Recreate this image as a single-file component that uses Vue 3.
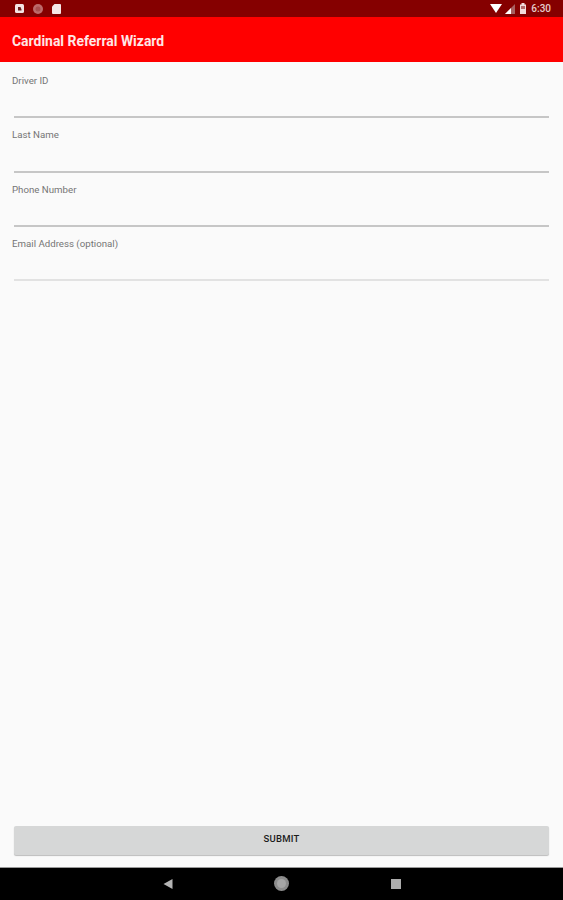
<script setup>
const fields = [
  { label: 'Driver ID' },
  { label: 'Last Name' },
  { label: 'Phone Number' },
  { label: 'Email Address (optional)', faint: true }
]
</script>

<template>
  <div class="screen">
    <div class="status-bar">
      <div class="status-left">
        <svg width="9" height="9" viewBox="0 0 9 9">
          <rect width="9" height="9" rx="1.5" fill="#f4e4e4" />
          <path d="M3 3H5.5L6.5 5.5V6.5H3z" fill="#6d2020" />
        </svg>
        <svg width="10" height="10" viewBox="0 0 10 10">
          <circle cx="5" cy="5" r="5" fill="#bd6b6b" />
          <circle cx="5" cy="5" r="2.5" fill="#a85050" />
        </svg>
        <svg width="9" height="10" viewBox="0 0 9 10">
          <path d="M2.5 0H8a1 1 0 0 1 1 1V9a1 1 0 0 1-1 1H1a1 1 0 0 1-1-1V2.5z" fill="#f6e8e8" />
        </svg>
      </div>
      <div class="status-right">
        <svg width="12" height="9" viewBox="0 0 12 9">
          <path d="M0 0H12L6 9z" fill="#fff" />
        </svg>
        <svg class="signal" width="10" height="10" viewBox="0 0 10 10">
          <path d="M10 0V10H0z" fill="#a86060" />
          <path d="M6 4V10H0z" fill="#fff" />
        </svg>
        <svg class="battery" width="6" height="11" viewBox="0 0 6 11">
          <path d="M1.5 0V1.5H0V11H6V1.5H4.5V0z" fill="#f2dcdc" />
          <rect x="1" y="3" width="4" height="3" fill="#b56a6a" />
        </svg>
        <span class="clock">6:30</span>
      </div>
    </div>

    <header class="app-bar">Cardinal Referral Wizard</header>

    <main class="content">
      <form class="form" @submit.prevent>
        <div v-for="field in fields" :key="field.label" class="field">
          <label class="field-label">{{ field.label }}</label>
          <div class="field-line" :class="{ faint: field.faint }"></div>
        </div>
      </form>
      <button class="submit" type="button">SUBMIT</button>
    </main>

    <nav class="nav-bar">
      <svg width="10" height="10" viewBox="0 0 10 10">
        <path d="M0.5 5L9.5 0V10z" fill="#b4b4b4" />
      </svg>
      <svg class="home" width="15" height="15" viewBox="0 0 15 15">
        <circle cx="7.5" cy="7.5" r="7.5" fill="#8c8c8c" />
        <circle cx="7.5" cy="7.5" r="4.5" fill="#a6a6a6" />
      </svg>
      <svg width="10" height="10" viewBox="0 0 10 10">
        <rect width="10" height="10" fill="#acacac" />
      </svg>
    </nav>
  </div>
</template>

<style>
html,
body {
  margin: 0;
  background: #fafafa;
}
</style>

<style scoped>
.screen {
  width: 563px;
  height: 900px;
  display: flex;
  flex-direction: column;
  background: #fafafa;
  font-family: Roboto, "Liberation Sans", sans-serif;
  overflow: hidden;
}

.status-bar {
  height: 17px;
  flex: none;
  display: flex;
  align-items: center;
  justify-content: space-between;
  padding: 0 12px 0 15px;
  background: #850000;
}

.status-left {
  display: flex;
  align-items: center;
  gap: 9px;
}

.status-right {
  display: flex;
  align-items: center;
  gap: 3px;
}

.battery {
  margin-left: 2px;
}

.clock {
  margin-left: 2px;
  font-size: 10px;
  font-weight: 500;
  color: #e6cccc;
}

.app-bar {
  height: 45px;
  flex: none;
  display: flex;
  align-items: center;
  padding: 2px 12px 0;
  box-sizing: border-box;
  background: #ff0000;
  color: #ffe6e6;
  font-size: 13.95px;
  font-weight: 700;
}

.content {
  flex: 1;
  display: flex;
  flex-direction: column;
  justify-content: space-between;
  padding: 13px 14px 12px 12px;
}

.form {
  display: flex;
  flex-direction: column;
}

.field {
  height: 54.25px;
  box-sizing: border-box;
  display: flex;
  flex-direction: column;
  justify-content: space-between;
  padding-bottom: 11px;
}

.field-label {
  font-size: 9.7px;
  line-height: 12px;
  color: #757575;
}

.field-line {
  height: 2px;
  margin-left: 2px;
  background: #c6c6c6;
}

.field-line.faint {
  background: #e2e2e2;
}

.submit {
  height: 29px;
  margin-left: 2px;
  padding: 0 0 4px;
  border: none;
  border-radius: 2px;
  background: #d6d7d7;
  box-shadow: 0 1px 1px #bcbcbc;
  color: #1c1c1c;
  font-family: inherit;
  font-size: 9.5px;
  font-weight: 500;
  letter-spacing: 0.25px;
}

.nav-bar {
  height: 33px;
  flex: none;
  display: flex;
  align-items: center;
  justify-content: center;
  gap: 101.5px;
  background: #000;
  border-top: 1px solid #999;
  box-sizing: border-box;
}

.home {
  margin-top: -1px;
}
</style>
